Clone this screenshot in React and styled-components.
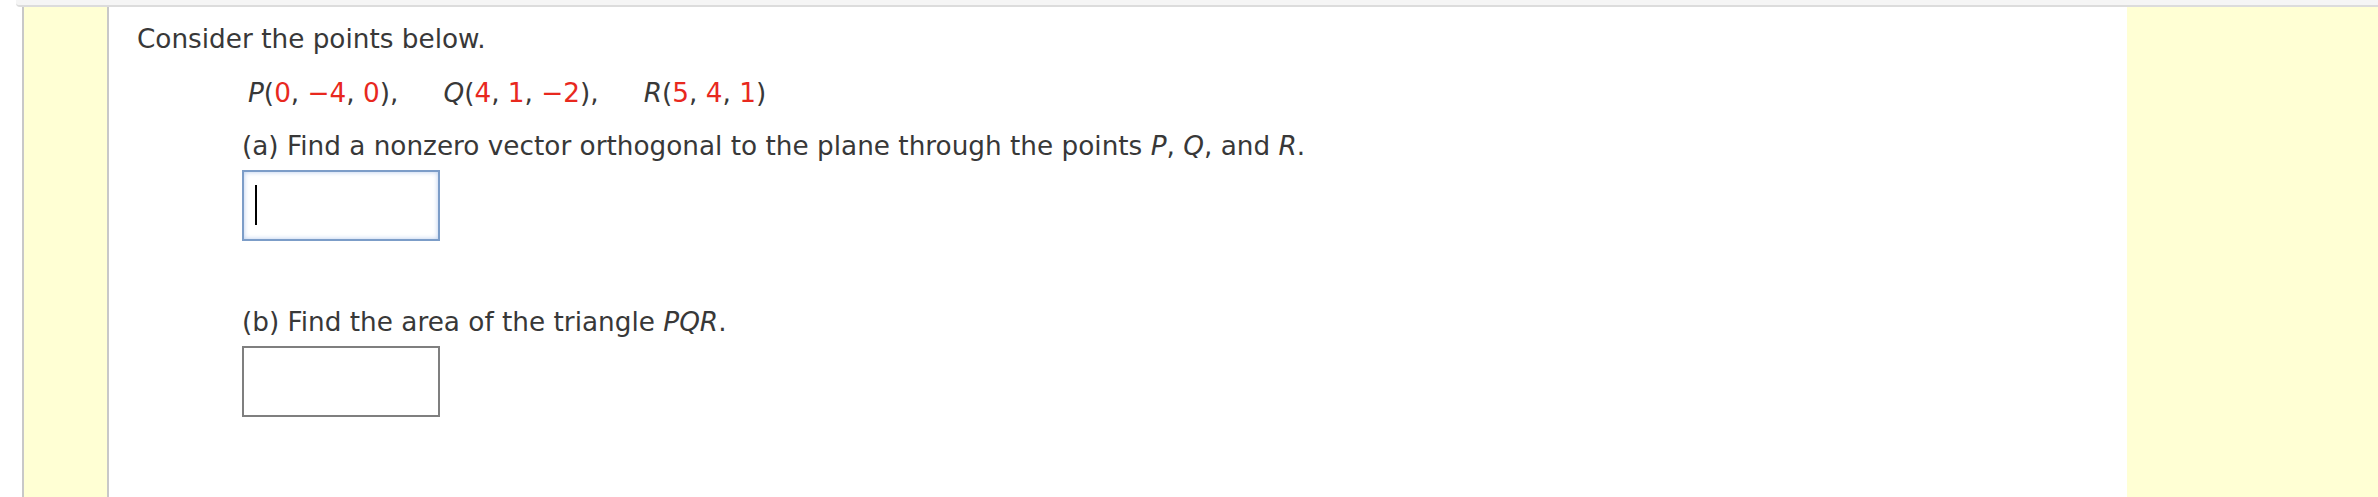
import React from 'react';
import styled, { createGlobalStyle } from 'styled-components';

const GlobalStyle = createGlobalStyle`
  html, body {
    margin: 0;
    padding: 0;
    background: #ffffff;
  }
  body {
    font-family: 'DejaVu Sans', Verdana, sans-serif;
  }
`;

const points = [
  { name: 'P', coords: ['0', '\u22124', '0'] },
  { name: 'Q', coords: ['4', '1', '\u22122'] },
  { name: 'R', coords: ['5', '4', '1'] },
];

const App = () => {
  return (
    <>
      <GlobalStyle />
      <Page>
        <TopStrip />
        <QuestionRow>
          <LeftGutter />
          <Content>
            <Prompt>Consider the points below.</Prompt>
            <PointsLine>
              {points.map((pt, i) => (
                <Point key={pt.name} last={i === points.length - 1}>
                  <Var>{pt.name}</Var>(
                  {pt.coords.map((c, j) => (
                    <React.Fragment key={j}>
                      <Num>{c}</Num>
                      {j < pt.coords.length - 1 ? ', ' : ''}
                    </React.Fragment>
                  ))}
                  ){i < points.length - 1 ? ',' : ''}
                </Point>
              ))}
            </PointsLine>
            <Part>
              <PartText>
                (a) Find a nonzero vector orthogonal to the plane through the points <Var>P</Var>,{' '}
                <Var>Q</Var>, and <Var>R</Var>.
              </PartText>
              <AnswerBox focused>
                <Caret />
              </AnswerBox>
            </Part>
            <Part second>
              <PartText>
                (b) Find the area of the triangle <Var>PQR</Var>.
              </PartText>
              <AnswerBox />
            </Part>
          </Content>
          <RightGutter />
        </QuestionRow>
      </Page>
    </>
  );
};

// Styled Components
const Page = styled.div`
  min-height: 497px;
  display: flex;
  flex-direction: column;
  color: #383838;
  font-family: 'DejaVu Sans', Verdana, sans-serif;
  font-size: 26.3px;
  line-height: 31px;
`;

const TopStrip = styled.div`
  margin-left: 16px;
  height: 5px;
  background-color: #f5f5f5;
  border-bottom: 2px solid #dcdcdc;
  border-bottom-left-radius: 4px;
`;

const QuestionRow = styled.div`
  flex: 1;
  display: flex;
  margin-left: 22px;
`;

const LeftGutter = styled.div`
  width: 83px;
  flex-shrink: 0;
  background-color: #ffffd4;
  border-left: 2px solid #c8c8c8;
  border-right: 2px solid #c8c8c8;
`;

const RightGutter = styled.div`
  width: 251px;
  flex-shrink: 0;
  background-color: #ffffd4;
`;

const Content = styled.div`
  flex: 1;
  padding: 16.5px 0 0 28px;
  background-color: #ffffff;
`;

const Prompt = styled.p`
  margin: 0 0 23px;
`;

const PointsLine = styled.div`
  display: flex;
  padding-left: 111px;
  margin-bottom: 22px;
`;

const Point = styled.span`
  margin-right: ${props => (props.last ? '0' : '45px')};
  white-space: pre;
`;

const Var = styled.i`
  font-style: italic;
`;

const Num = styled.span`
  color: #e8281e;
`;

const Part = styled.div`
  padding-left: 105px;
  margin-top: ${props => (props.second ? '66.5px' : '0')};
`;

const PartText = styled.p`
  margin: 0 0 8px;
`;

const AnswerBox = styled.div`
  box-sizing: border-box;
  width: 198px;
  height: 71px;
  display: flex;
  align-items: center;
  padding-left: 11px;
  background-color: #ffffff;
  border: 2px solid ${props => (props.focused ? '#7c9dc8' : '#7f7f7f')};
  box-shadow: ${props => (props.focused ? 'inset 0 0 5px rgba(120, 160, 220, 0.55)' : 'none')};
`;

const Caret = styled.span`
  width: 2px;
  height: 40px;
  background-color: #000000;
`;

export default App;
